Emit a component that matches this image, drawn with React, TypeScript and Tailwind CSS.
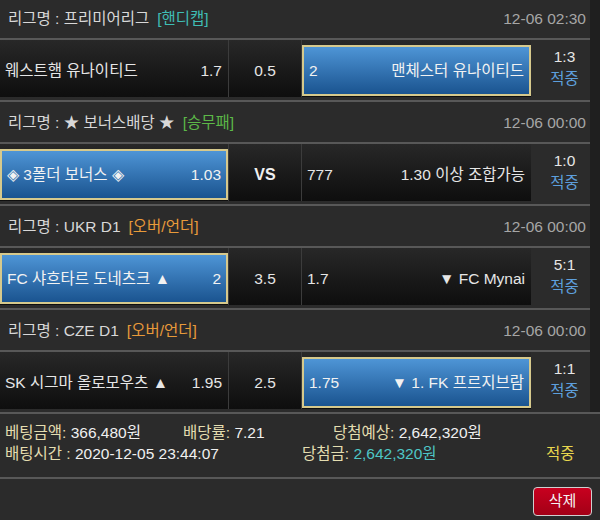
import React from "react";

type Side = { name: string; odds: string; selected?: boolean };
type Block = {
  league: string;
  tag: string;
  tagColor: string;
  date: string;
  left: Side;
  mid: string;
  midBold?: boolean;
  right: Side;
  score: string;
  first?: boolean;
};

const blocks: Block[] = [
  {
    league: "리그명 : 프리미어리그",
    tag: "[핸디캡]",
    tagColor: "text-[#3fbdb5]",
    date: "12-06 02:30",
    left: { name: "웨스트햄 유나이티드", odds: "1.7" },
    mid: "0.5",
    right: { name: "맨체스터 유나이티드", odds: "2", selected: true },
    score: "1:3",
    first: true,
  },
  {
    league: "리그명 : ★ 보너스배당 ★",
    tag: "[승무패]",
    tagColor: "text-[#5cb848]",
    date: "12-06 00:00",
    left: { name: "◈ 3폴더 보너스 ◈", odds: "1.03", selected: true },
    mid: "VS",
    midBold: true,
    right: { name: "1.30 이상 조합가능", odds: "777" },
    score: "1:0",
  },
  {
    league: "리그명 : UKR D1",
    tag: "[오버/언더]",
    tagColor: "text-[#e89a3a]",
    date: "12-06 00:00",
    left: { name: "FC 샤흐타르 도네츠크 ▲", odds: "2", selected: true },
    mid: "3.5",
    right: { name: "▼ FC Mynai", odds: "1.7" },
    score: "5:1",
  },
  {
    league: "리그명 : CZE D1",
    tag: "[오버/언더]",
    tagColor: "text-[#e89a3a]",
    date: "12-06 00:00",
    left: { name: "SK 시그마 올로모우츠 ▲", odds: "1.95" },
    mid: "2.5",
    right: { name: "▼ 1. FK 프르지브람", odds: "1.75", selected: true },
    score: "1:1",
  },
];

function Cell({ side, isRight }: { side: Side; isRight?: boolean }) {
  const first = isRight ? side.odds : side.name;
  const second = isRight ? side.name : side.odds;
  return (
    <div className="h-[57px] w-full bg-linear-to-b from-[#282828] to-[#0e0e0e] pt-[5px] pb-[1px]">
      {side.selected ? (
        <div className="h-full w-full border-2 border-[#d6c98c] bg-linear-to-b from-[#4e95d6] to-[#1a5490] flex items-center justify-between pl-[5px] pr-[5px] text-[#f2f2f2]">
          <span>{first}</span>
          <span>{second}</span>
        </div>
      ) : (
        <div className="h-full w-full flex items-center justify-between pl-[5px] pr-[6px] text-[#e6e6e6]">
          <span>{first}</span>
          <span>{second}</span>
        </div>
      )}
    </div>
  );
}

function BlockView({ b }: { b: Block }) {
  return (
    <div>
      {!b.first && <div className="h-[2px] bg-[#585858]" />}
      <div
        className={`${b.first ? "h-[38px]" : "h-[40px] pt-[2px]"} flex items-center justify-between pl-[8px] pr-[4px] bg-[#2b2b2b]`}
      >
        <div className="flex items-center">
          <span className="text-[#d8d8d8]">{b.league}</span>
          <span className={`ml-[8px] ${b.tagColor}`}>{b.tag}</span>
        </div>
        <span className="text-[#a6a6a6]">{b.date}</span>
      </div>
      <div className="h-[2px] bg-[#585858]" />
      <div className="h-[60px] flex bg-[#2b2b2b]">
        <div className="w-[228px]">
          <Cell side={b.left} />
        </div>
        <div className="w-[74px] h-[57px] bg-linear-to-b from-[#282828] to-[#0e0e0e] border-l border-r border-[#3c3c3c] flex items-center justify-center pt-[4px]">
          <span className={b.midBold ? "font-bold text-[#f0f0f0] text-[16px]" : "text-[#e6e6e6]"}>{b.mid}</span>
        </div>
        <div className="w-[229px]">
          <Cell side={b.right} isRight />
        </div>
        <div className="w-[59px] flex flex-col items-center pt-[6px] pl-[8px] leading-[22px]">
          <span className="text-[#e6e6e6]">{b.score}</span>
          <span className="text-[#5d9fdc]">적중</span>
        </div>
      </div>
    </div>
  );
}

export default function App() {
  return (
    <div
      className="w-[600px] h-[520px] bg-[#2b2b2b] text-[15.5px] overflow-hidden"
      style={{ fontFamily: '"Liberation Sans", "Noto Sans CJK KR", sans-serif' }}
    >
      <div className="flex">
        <div className="w-[590px]">
          {blocks.map((b, i) => (
            <BlockView key={i} b={b} />
          ))}
        </div>
        <div className="w-[10px] bg-[#1f1f1f]" />
      </div>
      <div className="h-[2px] bg-[#585858]" />
      <div className="h-[63px] pt-[8px] pl-[5px] text-[15.5px] leading-[21px]">
        <div className="flex">
          <div className="w-[178px] whitespace-nowrap">
            <span className="text-[#e4ddb0]">베팅금액: </span>
            <span className="text-[#f0f0f0]">366,480원</span>
          </div>
          <div className="w-[150px] whitespace-nowrap">
            <span className="text-[#e4ddb0]">배당률: </span>
            <span className="text-[#f0f0f0]">7.21</span>
          </div>
          <div className="whitespace-nowrap">
            <span className="text-[#e4ddb0]">당첨예상: </span>
            <span className="text-[#f0f0f0]">2,642,320원</span>
          </div>
        </div>
        <div className="flex">
          <div className="w-[297px] whitespace-nowrap">
            <span className="text-[#e4ddb0]">배팅시간 : </span>
            <span className="text-[#f0f0f0]">2020-12-05 23:44:07</span>
          </div>
          <div className="w-[244px] whitespace-nowrap">
            <span className="text-[#e4ddb0]">당첨금: </span>
            <span className="text-[#4ec6c6]">2,642,320원</span>
          </div>
          <div className="text-[#e8d64e]">적중</div>
        </div>
      </div>
      <div className="h-[2px] bg-[#585858]" />
      <div className="flex justify-end pt-[8px] pr-[8px]">
        <button className="w-[59px] h-[29px] rounded-[4px] border border-[#cfcfcf] bg-linear-to-b from-[#c8001f] to-[#a30016] text-[#f4f4f4] text-[15px] flex items-center justify-center">
          삭제
        </button>
      </div>
    </div>
  );
}
